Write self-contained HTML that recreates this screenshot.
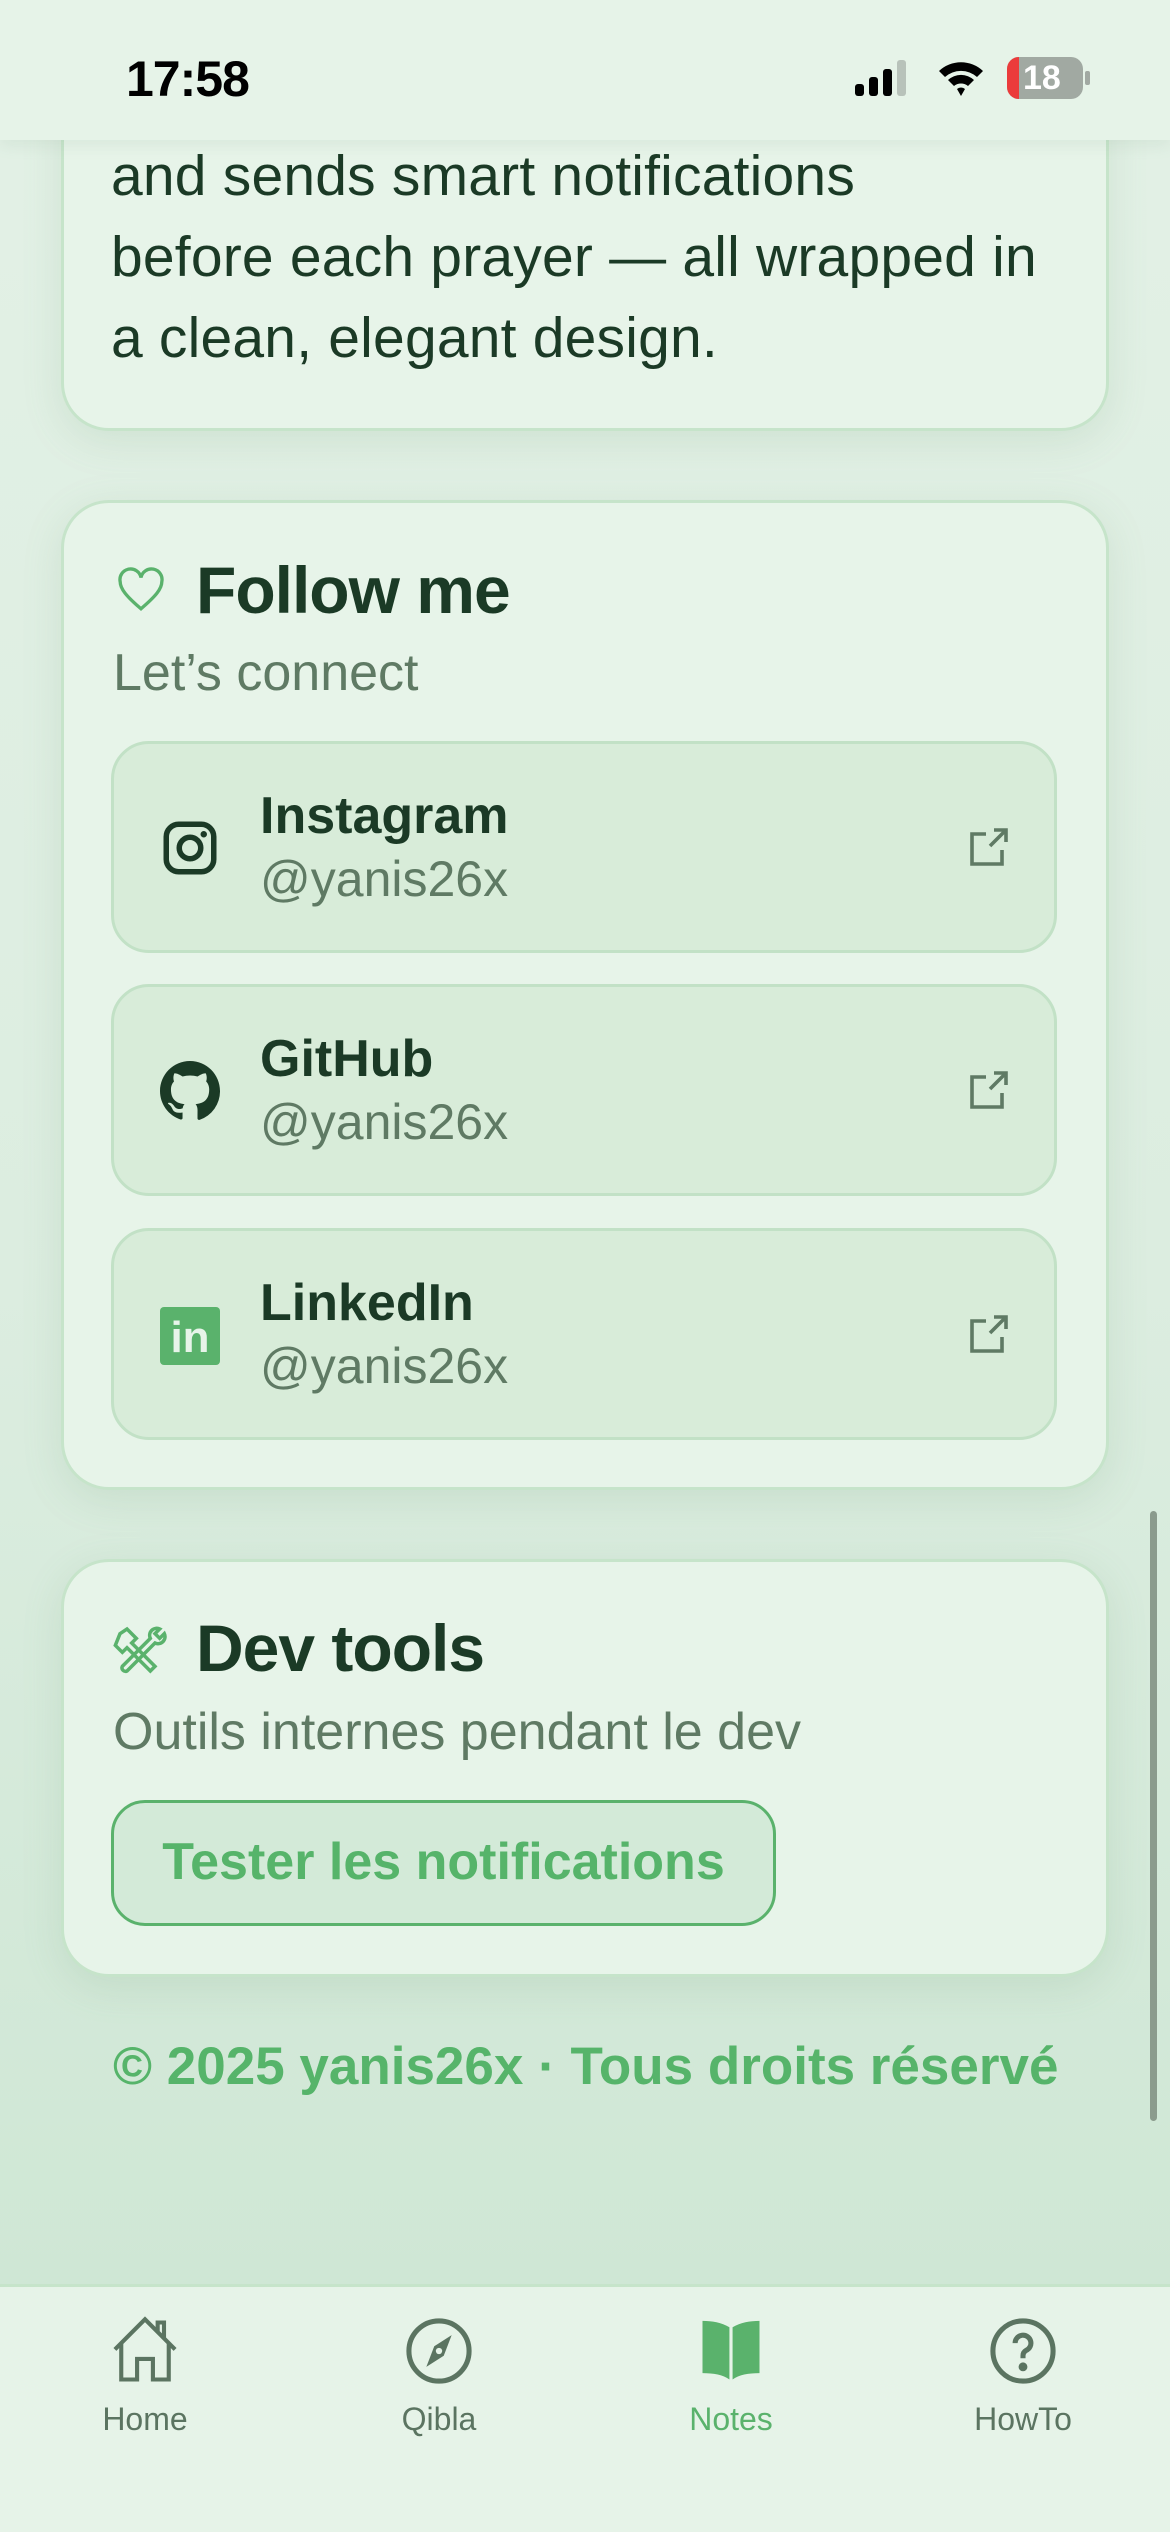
<!DOCTYPE html>
<html><head><meta charset="utf-8"><style>
*{margin:0;padding:0;box-sizing:border-box}
body{width:1170px;height:2532px;overflow:hidden;font-family:"Liberation Sans",sans-serif;background:linear-gradient(180deg,#e3f1e6 0%,#dcede0 50%,#cfe7d5 90%);position:relative;color:#1b3a26}
.status{position:absolute;left:0;top:0;width:1170px;height:140px;background:#e6f3e8;z-index:5;box-shadow:0 6px 14px rgba(120,160,130,.12)}
.time{position:absolute;left:126px;top:50px;font-size:50px;font-weight:700;color:#000;letter-spacing:-1px}
.card{position:absolute;left:61px;width:1048px;background:#e7f4e9;border:3px solid #c6e4ca;border-radius:48px;box-shadow:0 10px 40px rgba(100,150,110,.15)}
.p{position:absolute;left:111px;font-size:57px;color:#1b3a26;line-height:81px;letter-spacing:0.2px}
.h{position:absolute;font-size:66px;font-weight:700;color:#1b3a26;letter-spacing:-1px}
.sub{position:absolute;left:113px;font-size:52px;color:#5f7a64}
.item{position:absolute;left:111px;width:946px;height:212px;background:#d8ecd9;border:3px solid #c2e1c6;border-radius:38px}
.item .n{position:absolute;left:146px;top:42px;font-size:52px;font-weight:700;color:#1b3a26}
.item .u{position:absolute;left:146px;top:106px;font-size:50px;color:#5f7a64}
.item .ic{position:absolute;left:46px;top:74px}
.item .ex{position:absolute;left:850px;top:80px}
.btn{position:absolute;left:111px;top:1800px;width:665px;height:126px;border:3px solid #5ab26c;border-radius:34px;background:#d3ead8;color:#56b46a;font-size:52px;font-weight:700;text-align:center;line-height:118px}
.foot{position:absolute;left:113px;top:2036px;font-size:53px;font-weight:700;color:#56b46a}
.nav{position:absolute;left:0;top:2284px;width:1170px;height:248px;background:#e6f3e8;border-top:3px solid #c6e4ca}
.tab{position:absolute;top:26px;width:200px;margin-left:-100px;text-align:center;font-size:32px;color:#5b7461}
.tab svg{display:block;margin:0 auto 12px}
.scroll{position:absolute;left:1150px;top:1511px;width:7px;height:610px;border-radius:4px;background:#8b9b8d}
</style></head><body>
<div class="status">
<div class="time">17:58</div>
<svg style="position:absolute;left:855px;top:60px" width="60" height="36"><rect x="0" y="24" width="9" height="12" rx="3" fill="#000"/><rect x="14" y="17" width="9" height="19" rx="3" fill="#000"/><rect x="28" y="9" width="9" height="27" rx="3" fill="#000"/><rect x="42" y="0" width="9" height="36" rx="3" fill="#b8c2ba"/></svg>
<svg style="position:absolute;left:936px;top:58px" width="50" height="40" viewBox="0 0 50 40"><path d="M3 13 A32 32 0 0 1 47 13 L41 19 A24 24 0 0 0 9 19Z M12 22 A19 19 0 0 1 38 22 L32 28 A11 11 0 0 0 18 28Z M21 31 A6 6 0 0 1 29 31 L25 38Z" fill="#000"/></svg>
<div style="position:absolute;left:1007px;top:57px;width:76px;height:42px;border-radius:12px;background:#a1a9a2;overflow:hidden"><div style="width:12px;height:42px;background:#eb3b3b"></div><span style="position:absolute;left:16px;top:2px;font-size:34px;font-weight:700;color:#fff">18</span></div>
<div style="position:absolute;left:1085px;top:71px;width:5px;height:14px;border-radius:2px;background:#a1a9a2"></div>
</div>

<div class="card" style="top:-60px;height:491px"></div>
<div class="p" style="top:136px">and sends smart notifications</div>
<div class="p" style="top:217px">before each prayer — all wrapped in</div>
<div class="p" style="top:298px">a clean, elegant design.</div>

<div class="card" style="top:500px;height:990px"></div>
<svg style="position:absolute;left:115px;top:565px" width="52" height="50" viewBox="0 0 24 24"><path d="M12 21 C5 15 2 11.5 2 8 A5 5 0 0 1 12 6 A5 5 0 0 1 22 8 C22 11.5 19 15 12 21Z" fill="none" stroke="#5ab26c" stroke-width="1.6"/></svg>
<div class="h" style="left:196px;top:552px">Follow me</div>
<div class="sub" style="top:643px">Let’s connect</div>

<div class="item" style="top:741px"><svg class="ic" width="60" height="60" viewBox="0 0 24 24"><rect x="2.5" y="2.5" width="19" height="19" rx="5" fill="none" stroke="#1b3a26" stroke-width="2.2"/><circle cx="12" cy="12" r="4.3" fill="none" stroke="#1b3a26" stroke-width="2.2"/><circle cx="17.5" cy="6.5" r="1.3" fill="#1b3a26"/></svg>
<div class="n">Instagram</div><div class="u">@yanis26x</div>
<svg class="ex" width="48" height="48" viewBox="0 0 24 24" fill="none" stroke="#5f7a64" stroke-width="1.8"><path d="M11 5H4v15h15v-7M13 11 21 3M15 3h6v6"/></svg></div>

<div class="item" style="top:984px"><svg class="ic" width="60" height="60" viewBox="0 0 16 16"><path fill="#1b3a26" d="M8 0C3.58 0 0 3.58 0 8c0 3.54 2.29 6.53 5.47 7.59.4.07.55-.17.55-.38 0-.19-.01-.82-.01-1.49-2.01.37-2.53-.49-2.690-.94-.09-.23-.48-.94-.82-1.130-.28-.15-.68-.52-.01-.53.63-.01 1.08.58 1.23.82.72 1.21 1.87.87 2.33.66.07-.52.28-.87.51-1.07-1.78-.2-3.64-.89-3.64-3.95 0-.87.31-1.59.82-2.15-.08-.2-.36-1.02.08-2.12 0 0 .67-.21 2.2.82.64-.18 1.32-.27 2-.27.68 0 1.36.09 2 .27 1.53-1.04 2.2-.82 2.2-.82.44 1.1.16 1.92.08 2.12.51.56.82 1.27.82 2.15 0 3.07-1.87 3.75-3.65 3.95.29.25.54.78.54 1.58 0 1.07-.01 1.93-.01 2.2 0 .21.15.46.55.38A8.013 8.013 0 0 0 16 8c0-4.42-3.58-8-8-8z"/></svg>
<div class="n">GitHub</div><div class="u">@yanis26x</div>
<svg class="ex" width="48" height="48" viewBox="0 0 24 24" fill="none" stroke="#5f7a64" stroke-width="1.8"><path d="M11 5H4v15h15v-7M13 11 21 3M15 3h6v6"/></svg></div>

<div class="item" style="top:1228px"><div class="ic" style="left:46px;top:76px;width:60px;height:58px;background:#5ab26c;border-radius:4px;color:#e7f4e9;font-weight:700;font-size:44px;line-height:62px;text-align:center">in</div>
<div class="n">LinkedIn</div><div class="u">@yanis26x</div>
<svg class="ex" width="48" height="48" viewBox="0 0 24 24" fill="none" stroke="#5f7a64" stroke-width="1.8"><path d="M11 5H4v15h15v-7M13 11 21 3M15 3h6v6"/></svg></div>

<div class="card" style="top:1559px;height:418px"></div>
<svg style="position:absolute;left:111px;top:1622px" width="60" height="56" viewBox="0 0 24 24" fill="none" stroke="#5ab26c" stroke-width="1.5"><path d="M3 5l3-2 4 4-2 2 10 10-2 2L6 11 4 13 1 10z"/><path d="M20 3a3 3 0 0 0-4 4L4 19a1.5 1.5 0 0 0 2 2L18 9a3 3 0 0 0 4-4l-2 2-2-2z"/></svg>
<div class="h" style="left:196px;top:1610px">Dev tools</div>
<div class="sub" style="top:1702px">Outils internes pendant le dev</div>
<div class="btn">Tester les notifications</div>
<div class="foot">© 2025 yanis26x · Tous droits réservé</div>
<div class="scroll"></div>

<div class="nav">
<div class="tab" style="left:145px"><svg width="76" height="76" viewBox="0 0 24 24" fill="none" stroke="#5b7461" stroke-width="1.3"><path d="M2.5 11.5 12 2l9.5 9.5M4.5 9.5V21h5v-6.5h5V21h5V9.5M16 6V3h2v5"/></svg>Home</div>
<div class="tab" style="left:439px"><svg width="76" height="76" viewBox="0 0 24 24"><circle cx="12" cy="12" r="9.5" fill="none" stroke="#5b7461" stroke-width="1.6"/><path d="M16 7l-2.5 6.5L8 17l2.5-6.5z" fill="#5b7461"/><circle cx="12" cy="12" r="1" fill="#e6f3e8"/></svg>Qibla</div>
<div class="tab" style="left:731px;color:#5ab26c"><svg width="76" height="76" viewBox="0 0 24 24" fill="#5ab26c"><path d="M3 2.5c3 0 6 .5 8.5 2V21c-2-1.5-5-2-8.5-2z"/><path d="M21 2.5c-3 0-6 .5-8.5 2V21c2-1.5 5-2 8.5-2z"/></svg>Notes</div>
<div class="tab" style="left:1023px"><svg width="76" height="76" viewBox="0 0 24 24" fill="none" stroke="#5b7461" stroke-width="1.6"><circle cx="12" cy="12" r="9.5"/><path d="M9.5 9.5a2.5 2.5 0 1 1 3.5 2.3c-.7.4-1 1-1 1.7v.8"/><circle cx="12" cy="17" r=".6" fill="#5b7461"/></svg>HowTo</div>
</div>
</body></html>
